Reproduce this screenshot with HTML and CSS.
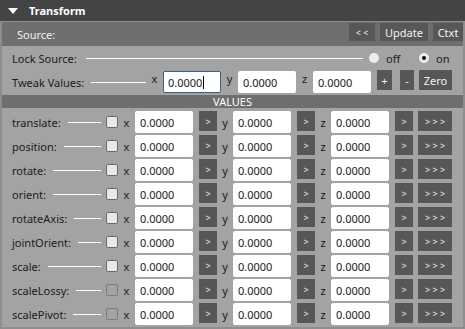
FILE: index.html
```html
<!DOCTYPE html>
<html lang="en">
<head>
    <meta charset="UTF-8">
    <title>Transform</title>
    <link rel="stylesheet" href="styles.css">
</head>
<body>
    <div class="panel">
        <div class="panel-head"><span class="arrow"></span>Transform</div>
        <div class="panel-body">
            <div class="source-bar">
                <span class="source-label">Source:</span>
                <div class="tools">
                    <button class="btn btn-back">&lt; &lt;</button>
                    <button class="btn btn-update">Update</button>
                    <button class="btn btn-ctxt">Ctxt</button>
                </div>
            </div>

            <div class="row lock-row">
                <span class="label-cell">Lock Source:</span>
                <label class="radio radio-off"><span class="circle"></span>off</label>
                <label class="radio radio-on"><span class="circle checked"></span>on</label>
            </div>

            <div class="row tweak-row">
                <span class="label-cell">Tweak Values:</span>
                <span class="axis">x</span>
                <div class="field focused">0.0000<span class="caret"></span></div>
                <span class="axis">y</span>
                <div class="field">0.0000</div>
                <span class="axis">z</span>
                <div class="field">0.0000</div>
                <button class="btn btn-plus">+</button>
                <button class="btn btn-minus">-</button>
                <button class="btn btn-zero">Zero</button>
            </div>

            <div class="section-title">VALUES</div>

            <div class="values" id="values"></div>
        </div>
    </div>

    <script>
        // attribute rows: name, whether the lock box is enabled
        const attrs = [
            ["translate", true], ["position", true], ["rotate", true],
            ["orient", true], ["rotateAxis", true], ["jointOrient", true],
            ["scale", true], ["scaleLossy", false], ["scalePivot", false]
        ];
        const values = document.getElementById("values");

        attrs.forEach(([name, enabled]) => {
            const row = document.createElement("div");
            row.className = "row value-row";
            let html = '<span class="label-cell">' + name + ':</span>';
            html += '<span class="check' + (enabled ? '' : ' disabled') + '"></span>';
            ["x", "y", "z"].forEach(axis => {
                html += '<span class="axis axis-' + axis + '">' + axis + '</span>';
                html += '<div class="field">0.0000</div>';
                html += '<button class="btn btn-step">&gt;</button>';
            });
            html += '<button class="btn btn-all">&gt; &gt; &gt;</button>';
            row.innerHTML = html;
            values.appendChild(row);
        });
    </script>
</body>
</html>
```

FILE: styles.css
```css
body {
    margin: 0;
    background: #a3a3a3;
    font-family: "Noto Sans", "Liberation Sans", sans-serif;
    font-size: 11px;
    color: #1c1c1c;
}

.panel {
    width: 465px;
    height: 329px;
}

.panel-head {
    height: 21px;
    background: #444444;
    color: #ffffff;
    font-weight: bold;
    display: flex;
    align-items: center;
}

.arrow {
    width: 0;
    height: 0;
    border-left: 5px solid transparent;
    border-right: 5px solid transparent;
    border-top: 6px solid #ffffff;
    margin: 0 11px 0 8px;
}

.panel-body {
    height: 305px;
    border: 2px solid #8e8e8e;
    border-top-width: 1px;
    background: #a3a3a3;
}

.source-bar {
    height: 24px;
    background: #6e6e6e;
    color: #f0f0f0;
    display: flex;
    align-items: center;
    padding-left: 15px;
}

.tools {
    margin-left: auto;
    align-self: flex-start;
    margin-top: 1px;
    display: flex;
    gap: 5px;
}

.btn {
    font-family: inherit;
    font-size: 11px;
    background: #575757;
    color: #f2f2f2;
    border: none;
    padding: 0;
    height: 18px;
    cursor: pointer;
}

.btn-back {
    width: 26px;
    font-size: 9px;
}

.btn-update {
    width: 48px;
}

.btn-ctxt {
    width: 30px;
}

.row {
    display: flex;
    align-items: center;
    padding-left: 10px;
}

.label-cell {
    display: flex;
    align-items: center;
    white-space: nowrap;
}

.label-cell::after {
    content: "";
    flex: 1;
    height: 1px;
    background: #ffffff;
    margin-left: 7px;
}

.lock-row {
    height: 24px;
}

.lock-row .label-cell {
    width: 351px;
    margin-right: 6px;
}

.lock-row .label-cell::after {
    margin-left: 9px;
}

.radio {
    display: flex;
    align-items: center;
    width: 50px;
}

.radio-on {
    width: 44px;
}

.circle {
    width: 10px;
    height: 10px;
    border-radius: 50%;
    background: #ececec;
    margin-right: 7px;
    display: flex;
    align-items: center;
    justify-content: center;
}

.circle.checked::after {
    content: "";
    width: 4px;
    height: 4px;
    border-radius: 50%;
    background: #000000;
}

.axis {
    width: 17px;
    text-align: center;
}

.field {
    width: 58px;
    height: 22px;
    box-sizing: border-box;
    background: #ffffff;
    border-radius: 2px;
    padding-left: 5px;
    display: flex;
    align-items: center;
    color: #1a1a1a;
}

.field.focused {
    border: 1px solid #3d5f80;
    padding-left: 4px;
}

.caret {
    width: 1px;
    height: 13px;
    background: #000000;
    margin-left: 1px;
}

.tweak-row {
    height: 25px;
    align-items: flex-start;
    padding-top: 1px;
    box-sizing: border-box;
}

.tweak-row .label-cell,
.tweak-row .axis {
    height: 22px;
}

.tweak-row .label-cell {
    width: 134px;
}

.btn-plus {
    width: 15px;
    height: 20px;
    margin-left: 6px;
    margin-top: -1px;
}

.btn-minus {
    width: 14px;
    height: 20px;
    margin-left: 8px;
    margin-top: -1px;
}

.btn-zero {
    width: 33px;
    height: 20px;
    margin-left: 5px;
    margin-top: -1px;
}

.section-title {
    height: 13px;
    line-height: 13px;
    background: #6e6e6e;
    color: #ffffff;
    text-align: center;
}

.values {
    padding-top: 3px;
}

.value-row {
    height: 22px;
    margin-bottom: 2px;
}

.value-row .label-cell {
    width: 89px;
}

.check {
    width: 12px;
    height: 12px;
    box-sizing: border-box;
    border: 1px solid #6c6c6c;
    border-radius: 2px;
    background: #e8e8e8;
    margin-left: 5px;
}

.check.disabled {
    background: #a3a3a3;
    border-color: #7c7c7c;
}

.value-row .axis {
    width: 16px;
}

.value-row .axis-x {
    width: 17px;
}

.btn-step {
    width: 18px;
    height: 20px;
    font-size: 9px;
    margin-left: 6px;
    align-self: flex-start;
}

.btn-all {
    width: 34px;
    height: 20px;
    font-size: 9px;
    margin-left: 5px;
    align-self: flex-start;
}
```
